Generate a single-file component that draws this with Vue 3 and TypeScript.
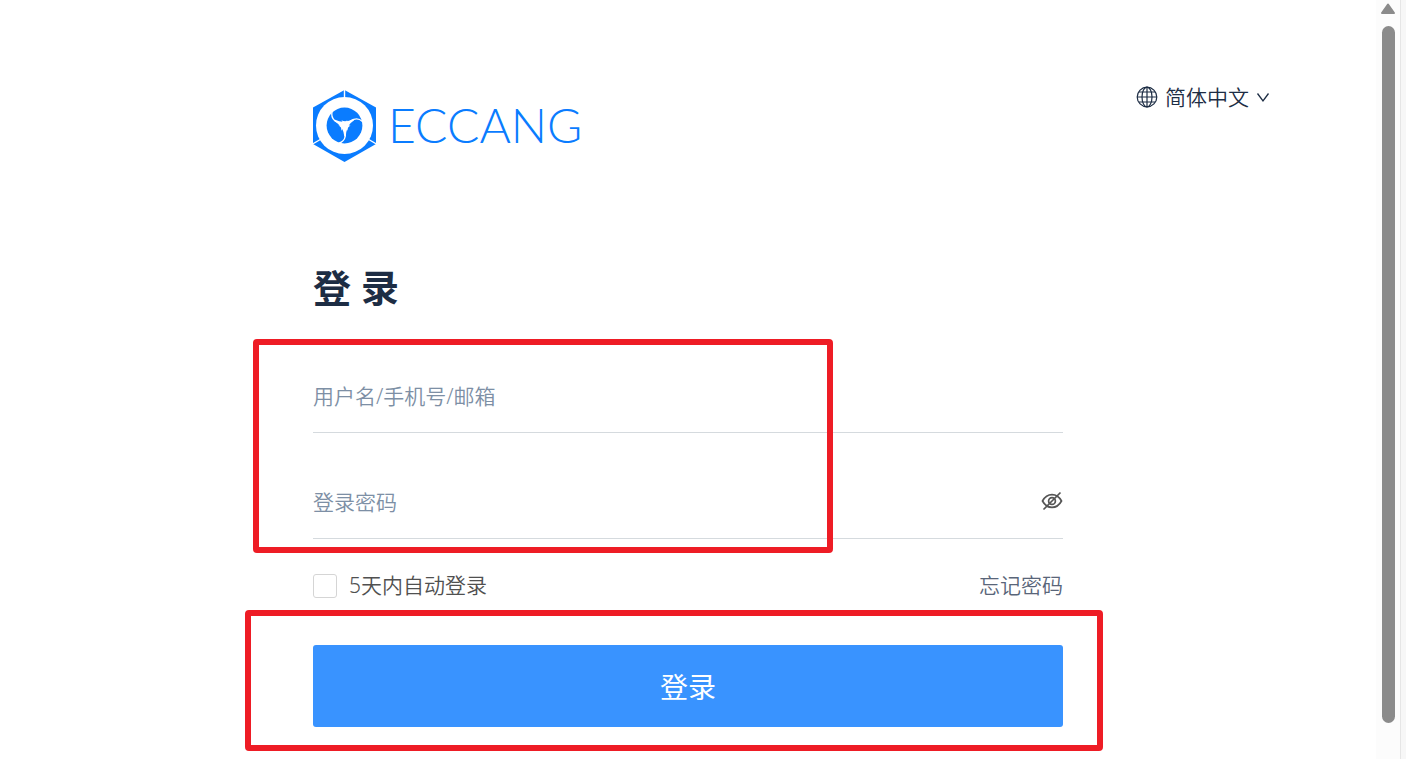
<script setup lang="ts">
import { ref } from 'vue'

const account = ref('')
const password = ref('')
const remember = ref(false)
const showPassword = ref(false)
const language = ref('zh')
const turns: number[] = [0, 120, 240]
</script>

<template>
  <div class="window">
    <div class="page">
      <header class="header">
        <a class="brand" href="#" aria-label="ECCANG">
          <svg class="mark" width="63" height="72" viewBox="0 0 63 72" aria-hidden="true">
            <path d="M31.5 0 63 17.500V54L31.5 72 0 54V17.500Z" fill="#0a7cff" />
            <g transform="translate(31.5 35.500)">
              <g v-for="t in turns" :key="t" :transform="`rotate(${t})`">
                <path d="M0-26V-37" stroke="#fff" stroke-width="1.4" />
              </g>
              <circle r="28.5" fill="#fff" />
              <circle r="17.9" fill="#0a7cff" />
              <g v-for="t in turns" :key="t" :transform="`rotate(${t})`">
                <path d="M0 0C1.200 8 2.500 15-5.500 17.600" fill="none" stroke="#fff" stroke-width="1.3" />
                <path d="M1.200 11Q1.600 2 6 0L-6 0Q-1 2-.2 11Z" fill="#fff" />
              </g>
            </g>
          </svg>
          <span class="wordmark">ECCANG</span>
        </a>
        <label class="language">
          <svg width="22" height="22" viewBox="0 0 22 22" fill="none" stroke="#1d2d44" stroke-width="1.2" aria-hidden="true">
            <circle cx="11" cy="11" r="9.8" />
            <ellipse cx="11" cy="11" rx="5" ry="9.8" />
            <path d="M11 1V21M1 11H21M2.8 6H19.2M2.8 16H19.2" />
          </svg>
          <select v-model="language" aria-label="语言">
            <option value="zh">简体中文</option>
          </select>
          <svg width="14" height="14" viewBox="0 0 14 14" fill="none" stroke="#1d2d44" stroke-width="1.3" aria-hidden="true">
            <path d="M1.5 3.500 7 11 12.5 3.500" />
          </svg>
        </label>
      </header>

      <form class="form" @submit.prevent>
        <h1>登 录</h1>
        <div class="fields">
          <div class="field">
            <input v-model="account" type="text" placeholder="用户名/手机号/邮箱" aria-label="用户名/手机号/邮箱" />
          </div>
          <div class="field">
            <input v-model="password" :type="showPassword ? 'text' : 'password'" placeholder="登录密码" aria-label="登录密码" />
            <button class="eye" type="button" aria-label="显示密码" @click="showPassword = !showPassword">
              <svg width="22" height="20" viewBox="0 0 22 20" fill="none" stroke="#555" stroke-width="1.7" aria-hidden="true">
                <path d="M1.5 10C4 5.400 7.300 3.600 11 3.600S18 5.400 20.500 10C18 14.600 14.700 16.400 11 16.400S4 14.600 1.500 10Z" />
                <circle cx="11" cy="10" r="3.400" />
                <path d="M2.500 18.500 19.500 1.500" />
              </svg>
            </button>
          </div>
          <span class="highlight around-fields"></span>
        </div>
        <div class="options">
          <label class="remember">
            <input v-model="remember" type="checkbox" />
            <span>5天内自动登录</span>
          </label>
          <a href="#">忘记密码</a>
        </div>
        <div class="action">
          <button class="submit" type="submit">登录</button>
          <span class="highlight around-action"></span>
        </div>
      </form>
    </div>

    <div class="scrollbar" aria-hidden="true">
      <svg width="16" height="12" viewBox="0 0 16 12">
        <path d="M8 1.500 14 10H2Z" fill="#8b8b8b" stroke="#8b8b8b" stroke-width="2" stroke-linejoin="round" />
      </svg>
      <div class="thumb"></div>
    </div>
    <div class="edge"></div>
  </div>
</template>

<style>
body {
  background: #fff;
}
</style>

<style scoped>
.window {
  display: flex;
  height: 100vh;
  overflow: hidden;
  font-family: "Noto Sans", "Noto Sans CJK SC", sans-serif;
  font-size: 21px;
  font-weight: 350;
  line-height: 32px;
  color: #1d2d44;
}

.window * {
  box-sizing: border-box;
}

input,
button,
select {
  margin: 0;
  padding: 0;
  border: 0;
  background: none;
  color: inherit;
  font: inherit;
}

.page {
  flex: 1;
  min-width: 0;
}

.header {
  display: grid;
  grid-template-columns: 1fr minmax(0, 750px) 1fr;
  padding-top: 81px;
}

.brand {
  grid-column: 2;
  display: flex;
  align-items: center;
  gap: 12px;
  margin-top: 9px;
  justify-self: start;
  height: 72px;
  color: #0a7cff;
  text-decoration: none;
}

.wordmark {
  padding-bottom: 2px;
  font-family: Lato, sans-serif;
  font-size: 48px;
  font-weight: 300;
  line-height: 70px;
}

.language {
  display: flex;
  align-items: center;
  align-self: start;
  justify-self: end;
  gap: 7px;
  margin-right: 106px;
}

.language select {
  appearance: none;
  height: 32px;
}

.language svg {
  flex: none;
}

.form {
  max-width: 750px;
  margin: 0 auto;
}

h1 {
  margin: 97px 0 0;
  font-size: 38px;
  font-weight: 700;
  line-height: 56px;
}

.fields {
  position: relative;
  display: grid;
  gap: 34px;
  margin-top: 46px;
}

.field {
  display: flex;
  align-items: center;
  height: 72px;
  padding-bottom: 2px;
  border-bottom: 1px solid #d5dade;
}

.field input {
  flex: 1;
  min-width: 0;
  height: 68px;
  outline: 0;
}

.field input::placeholder {
  color: #7d8fa5;
  opacity: 1;
}

.eye {
  display: flex;
  padding-bottom: 2px;
}

.options {
  display: flex;
  align-items: center;
  justify-content: space-between;
  margin-top: 30px;
  color: #505050;
}

.options a {
  padding-bottom: 2px;
  color: #596579;
  text-decoration: none;
}

.remember {
  display: flex;
  align-items: center;
  gap: 12px;
}

.remember span {
  padding-bottom: 2px;
}

.remember input {
  appearance: none;
  width: 24px;
  height: 24px;
  border: 1px solid #d5d5d5;
  border-radius: 3px;
}

.action {
  position: relative;
  margin-top: 42px;
}

.submit {
  display: block;
  width: 100%;
  height: 82px;
  padding-top: 2px;
  border-radius: 3px;
  background: #3993ff;
  color: #fff;
  font-size: 28px;
  font-weight: 400;
}

.highlight {
  position: absolute;
  border: 6px solid #ee1c25;
  border-radius: 4px;
  pointer-events: none;
}

.around-fields {
  inset: -22px 230px -14px -60px;
}

.around-action {
  inset: -35px -40px -24px -68px;
}

.scrollbar {
  display: flex;
  flex-direction: column;
  align-items: center;
  gap: 11px;
  width: 24px;
  padding: 3px 0 36px;
  background: #fcfcfc;
}

.thumb {
  flex: 1;
  width: 13px;
  border-radius: 7px;
  background: #8b8b8b;
}

.edge {
  width: 6px;
  border-left: 1px solid #e6e6e6;
  background: #f7f7f7;
}
</style>
